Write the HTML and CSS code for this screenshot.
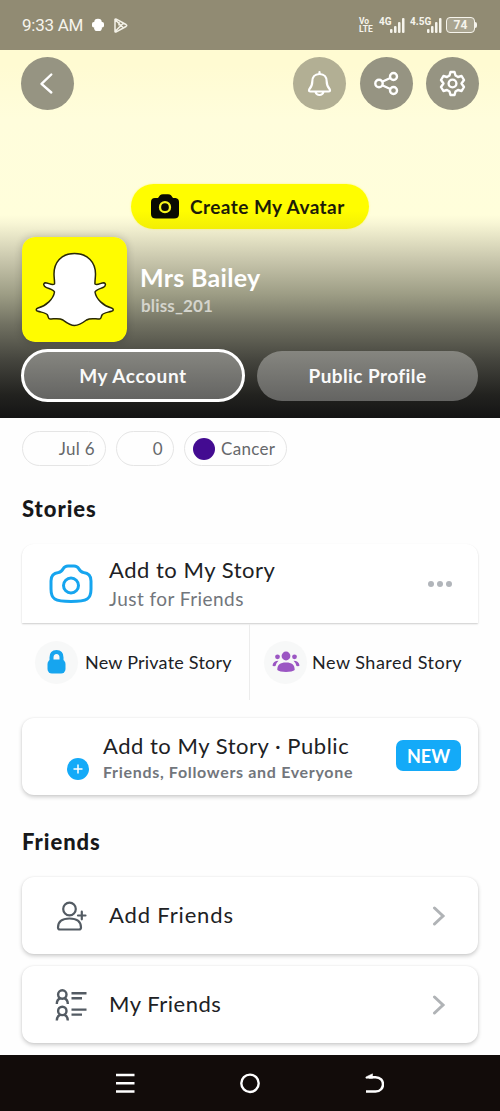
FILE: index.html
```html
<!DOCTYPE html>
<html lang="en">
<head>
<meta charset="utf-8">
<title>Profile</title>
<link rel="stylesheet" href="styles.css">
</head>
<body>
<div class="phone">
  <div class="status">
    <span class="time">9:33 AM</span>
    <svg class="droid" width="12" height="14" viewBox="0 0 12 14" fill="#fff"><path d="M2.200 4.200A3.800 3.400 0 0 1 9.800 4.200V11.200H2.200Z"/><rect x="0" y="4" width="12" height="5.500" rx="1.800"/><rect x="2.600" y="9" width="6.800" height="4" rx="1.400"/></svg>
    <svg class="play" width="14" height="15" viewBox="0 0 14 15" fill="none" stroke="#f4f2e8" stroke-width="1.500" stroke-linejoin="round"><path d="M1 1.300V13.700Q1.500 14.200 2.300 13.800L12 8.500Q13.500 7.500 12 6.500L2.300 1.200Q1.500 .8 1 1.300ZM1.500 2L9.500 10M1.500 13L9.500 5M5 2.800V7.500"/></svg>
    <span class="volte"><span>Vo</span><span>LTE</span></span>
    <span class="net net-a">4G</span>
    <svg class="bars" width="15" height="15" viewBox="0 0 15 15" fill="#f6f4ec"><rect x="0" y="11" width="2.500" height="4" rx="1"/><rect x="4" y="8" width="2.500" height="7" rx="1"/><rect x="8" y="4" width="2.500" height="11" rx="1"/><rect x="12" y="0" width="2.500" height="15" rx="1"/></svg>
    <span class="net net-b">4.5G</span>
    <svg class="bars tuck" width="15" height="15" viewBox="0 0 15 15" fill="#f6f4ec"><rect x="0" y="11" width="2.500" height="4" rx="1"/><rect x="4" y="8" width="2.500" height="7" rx="1"/><rect x="8" y="4" width="2.500" height="11" rx="1"/><rect x="12" y="0" width="2.500" height="15" rx="1"/></svg>
    <span class="battery">74</span><span class="battery-tip"></span>
  </div>

  <header class="hero">
    <div class="tools">
      <span class="round back"><svg width="53" height="53" viewBox="0 0 53 53" fill="none" stroke="#fff" stroke-width="2.400" stroke-linecap="round" stroke-linejoin="round"><path d="M30.300 17.500L20.500 26.800L30.300 35.500"/></svg></span>
      <span class="round bell"><svg width="53" height="53" viewBox="0 0 53 53" fill="none" stroke="#fff" stroke-width="2.200" stroke-linejoin="round" stroke-linecap="round"><path d="M26.500 15V17M26.500 17C21.500 17 19.300 20.500 19.300 24.500C19.300 28.500 18.500 29.800 16.300 32.300Q15.300 34.500 17.500 34.500H35.500Q37.700 34.500 36.700 32.300C34.500 29.800 33.700 28.500 33.700 24.500C33.700 20.500 31.500 17 26.500 17ZM22.500 35Q23.500 38 26.500 38T30.500 35"/></svg></span>
      <span class="round"><svg width="53" height="53" viewBox="0 0 53 53" fill="none" stroke="#fff" stroke-width="2.400"><path d="M22.700 24.500L30.300 21M22.700 28.500L30.300 32"/><circle cx="19" cy="26.500" r="3.700"/><circle cx="33.500" cy="19.500" r="3.500"/><circle cx="33.500" cy="33.500" r="3.500"/></svg></span>
      <span class="round"><svg width="53" height="53" viewBox="0 0 53 53" fill="none" stroke="#fff" stroke-width="2.400" stroke-linejoin="round"><path d="M24.500 15H28.500L29.500 18.500L32 20L35.600 19L38 23L35.500 26.500L38 30L35.600 34L32 33L29.500 34.500L28.500 38H24.500L23.500 34.500L21 33L17.400 34L15 30L17.500 26.500L15 23L17.400 19L21 20L23.500 18.500Z"/><circle cx="26.500" cy="26.500" r="3.900"/></svg></span>
    </div>
    <div class="create"><svg width="28" height="25" viewBox="0 0 28 25"><path d="M4 4H7L9 1.200Q10 .3 12 .3H17Q19 .3 20 1.200L22 4H24.500Q28 4.500 28 8V20Q28 24.500 23 24.500H5Q0 24.500 0 20V8Q0 4 4 4Z" fill="#090a02"/><circle cx="14" cy="13.200" r="5" fill="none" stroke="#f5f31d" stroke-width="2.300"/></svg><span class="create-label">Create My Avatar</span></div>
    <div class="person">
      <svg class="avatar" width="105" height="105" viewBox="0 0 105 105"><rect width="105" height="105" rx="13" fill="#fffc00"/><path d="M52.500 16.500C39 16.500 32 25.500 32 37C32 41 32.800 44.500 32.500 47C30 49 26 45.500 23 45.700C21 46.500 21.500 49 24 50.300C27 51.800 31.500 52.500 32.500 55C31.500 62 24 69 16 71C13.500 72 13.800 73.800 16 74.300C20 75.500 24 75.500 25.500 78C26.500 80 26 81.800 28 82C32 82 37 80.500 41 83C45 86 48 88.500 52.500 88.500C57 88.500 60.500 86 64.500 83C68.500 80.500 73 82 77.500 82C79.500 81.800 78.800 80 80 78C81.500 75.500 85.500 75.500 89.500 74.300C91.700 73.800 92 72 89.500 71C81.500 69 74 62 73 55C74 52.500 78 51.800 81.500 50.300C84 49 84 46.500 82 45.700C79 45.500 75.500 49 73 47C72.700 44.500 73.500 41 73.500 37C73.500 25.500 66 16.500 52.500 16.500Z" fill="#fff" stroke="#292807" stroke-width="1.500" stroke-linejoin="round"/></svg>
      <div class="names"><span class="name">Mrs Bailey</span><span class="user">bliss_201</span></div>
    </div>
    <div class="tabs">
      <span class="tab tab-on"><span class="t-acc">My Account</span></span>
      <span class="tab tab-off"><span class="t-pub">Public Profile</span></span>
    </div>
  </header>

  <main class="content">
    <div class="chips">
      <span class="chip chip-date">Jul 6</span>
      <span class="chip chip-score">0</span>
      <span class="chip chip-sign"><i class="sign"></i><span>Cancer</span></span>
    </div>

    <h2 class="title title-stories">Stories</h2>
    <div class="card story">
      <svg class="cam" width="44" height="40" viewBox="0 0 44 40" fill="none" stroke="#16a5ef" stroke-width="3"><path d="M9.500 8.500C12 8 13 7 14 5C15.200 3 16.500 2 19 2H25C27.500 2 28.800 3 30 5C31 7 32 8 34.500 8.500C39.500 9 42 12 42 17V25C42 35 38.500 37.500 22 37.500S2 35 2 25V17C2 12 4.500 9 9.500 8.500Z"/><circle cx="22" cy="21.500" r="7.500"/></svg>
      <div class="lines"><span class="big b-story">Add to My Story</span><span class="sub s-friends">Just for Friends</span></div>
      <span class="dots"><i></i><i></i><i></i></span>
    </div>
    <div class="pair">
      <div class="half half-a"><span class="disc"><svg width="19" height="24" viewBox="0 0 19 24"><path d="M4.500 11V7.500Q4.500 2 9.500 2T14.500 7.500V11" fill="none" stroke="#16a5ef" stroke-width="4"/><rect x=".5" y="9.500" width="18" height="14" rx="4.500" fill="#16a5ef"/></svg></span><span class="new n-private">New Private Story</span></div>
      <div class="half half-b"><span class="disc"><svg width="28" height="22" viewBox="0 0 28 22" fill="#9b56c3"><circle cx="14" cy="5" r="4.400"/><circle cx="5.500" cy="5.800" r="2.400"/><circle cx="22.500" cy="5.800" r="2.400"/><path d="M5.300 19C5.300 13.500 8 11.500 14 11.500S22.700 13.500 22.700 19C20.500 21.500 7.500 21.500 5.300 19ZM.5 14.500Q1 10 6.500 9.800Q4 12 3.500 15Q1 15.500.5 14.500ZM27.500 14.500Q27 10 21.500 9.800Q24 12 24.500 15Q27 15.500 27.500 14.500Z"/></svg></span><span class="new n-shared">New Shared Story</span></div>
    </div>
    <div class="card public">
      <svg class="plus" width="22" height="22" viewBox="0 0 22 22"><circle cx="11" cy="11" r="11" fill="#14aaf8"/><path d="M6.500 11H15.500M11 6.500V15.500" stroke="#fff" stroke-width="1.500"/></svg>
      <div class="lines"><span class="big b-public">Add to My Story · Public</span><span class="sub s-every">Friends, Followers and Everyone</span></div>
      <span class="badge">NEW</span>
    </div>

    <h2 class="title title-friends">Friends</h2>
    <div class="card row">
      <svg class="row-icon" width="32" height="32" viewBox="0 0 32 32" fill="none" stroke="#535b63" stroke-width="2.200" stroke-linecap="round" stroke-linejoin="round"><circle cx="14.500" cy="9" r="6.300"/><path d="M3 27.500C3 21.500 7.500 18.500 14.500 18.500S26 21.500 26 27.500Q26 29.500 24 29.500H5Q3 29.500 3 27.500ZM23 15.500H30.500M26.800 11.700V19.300"/></svg>
      <span class="big b-add">Add Friends</span>
      <svg class="chev" width="14" height="20" viewBox="0 0 14 20" fill="none" stroke="#b0b3b6" stroke-width="3" stroke-linecap="round"><path d="M2.500 2L11 10L2.500 18"/></svg>
    </div>
    <div class="card row row-last">
      <svg class="row-icon" width="32" height="32" viewBox="0 0 32 32" fill="none" stroke="#535b63" stroke-width="2.400"><g id="p"><circle cx="7.300" cy="5.500" r="4.200"/><path d="M1.800 15C1.800 11.500 3.500 10 5.500 9.200M12.800 15C12.800 11.500 11.100 10 9.100 9.200"/><path d="M16.500 4.200H31.500M16.500 9.200H27"/></g><use href="#p" y="16.400"/></svg>
      <span class="big b-my">My Friends</span>
      <svg class="chev" width="14" height="20" viewBox="0 0 14 20" fill="none" stroke="#b0b3b6" stroke-width="3" stroke-linecap="round"><path d="M2.500 2L11 10L2.500 18"/></svg>
    </div>
  </main>

  <nav class="nav">
    <svg width="19" height="21" viewBox="0 0 19 21" stroke="#fff" stroke-width="2.400"><path d="M0 2H18.500M0 10.200H18.500M0 18.500H18.500"/></svg>
    <svg width="21" height="21" viewBox="0 0 21 21" fill="none" stroke="#fff" stroke-width="2.400"><circle cx="10" cy="10.300" r="8.700"/></svg>
    <svg width="19" height="21" viewBox="0 0 19 21" fill="none" stroke="#fff" stroke-width="2.500"><path d="M1 18.500H10.500C20.500 18.500 20.500 4.200 10.500 4.200H4"/><path d="M.8 4L7.500.8V5.300H1Z" fill="#fff" stroke-width=".5"/></svg>
  </nav>
</div>
</body>
</html>
```
FILE: styles.css
```css
* { box-sizing: border-box; }
body { margin: 0; background: #fefefe; font-family: Lato, sans-serif; color: #202124; }
svg { display: block; flex: none; }
.phone { width: 500px; height: 1111px; display: flex; flex-direction: column; overflow: hidden; }

.status { height: 50px; flex: none; background: #918b73; color: #f6f4ec; display: flex; align-items: center; padding: 0 22px; font-family: Roboto, sans-serif; }
.time { font-size: 17px; width: 61px; white-space: nowrap; letter-spacing: -.25px; }
.droid { margin-left: 9px; }
.play { margin-left: 10px; }
.volte { margin-left: auto; display: flex; flex-direction: column; font-size: 8.500px; line-height: 8px; font-weight: 700; width: 16px; }
.net { font-size: 10px; font-weight: 700; line-height: 10px; margin-bottom: 7px; white-space: nowrap; }
.net-a { margin-left: 4px; width: 11px; }
.net-b { margin-left: 5px; width: 21px; }
.bars { margin-bottom: -1px; }
.tuck { margin-left: -4px; }
.battery { margin-left: 4px; width: 29px; height: 16px; border: 1.500px solid #f6f4ec; border-radius: 4px; background: #aaa591; font-size: 12px; font-weight: 700; line-height: 14px; text-align: center; }
.battery-tip { width: 2px; height: 6px; background: #f6f4ec; border-radius: 0 2px 2px 0; margin-right: 1px; }

.hero { height: 368px; flex: none; padding: 7px 21px 0; background: linear-gradient(#fffbd2 0, #fffbd2 15px, #fffddc 70px, #fffedb 165px, #f8f6d5 173px, #c8c6ac 210px, #9c9c84 245px, #707061 275px, #45453e 310px, #22221f 345px, #141414 368px); }
.tools { display: flex; gap: 13.500px; }
.round { width: 53px; height: 53px; border-radius: 50%; background: #969482; }
.back { margin-right: auto; }
.bell { background: #b2af94; }
.create { width: 238px; height: 45px; margin: 74px auto 0; border-radius: 23px; background: linear-gradient(#fffd00 60%, #f2ee05); display: flex; align-items: center; padding-left: 20px; box-shadow: 0 0 2px #fff80080; }
.create-label { margin-left: 11px; font-size: 19px; font-weight: 700; color: #1c1b08; white-space: nowrap; letter-spacing: .45px; }
.person { display: flex; margin: 8px 0 0 1px; }
.avatar { border-radius: 13px; box-shadow: 0 0 8px #0003; }
.names { margin: 24px 0 0 13px; display: flex; flex-direction: column; color: #fff; }
.name { font-size: 25px; line-height: 32px; font-weight: 700; letter-spacing: .3px; }
.user { margin: 1px 0 0 1px; font-size: 17px; line-height: 24px; font-weight: 700; color: #d4d4cc; letter-spacing: .15px; }
.tabs { display: flex; align-items: center; gap: 12px; margin-top: 7px; }
.tab { height: 50px; border-radius: 27px; display: flex; align-items: center; justify-content: center; background: linear-gradient(#868680, #646462); color: #fafafa; font-size: 19px; font-weight: 700; }
.tab-on { width: 224px; height: 53px; border: 3px solid #fff; letter-spacing: .6px; }
.tab-off { width: 221px; letter-spacing: .42px; }

.content { flex: 1; padding: 0 22px; }
.chips { display: flex; gap: 10px; margin-top: 13px; }
.chip { height: 35px; border: 1.500px solid #e5e5e5; border-radius: 18px; display: flex; align-items: center; font-size: 17px; color: #66686b; white-space: nowrap; letter-spacing: .3px; }
.chip-date { width: 84px; justify-content: flex-end; padding-right: 10px; }
.chip-score { width: 58px; justify-content: flex-end; padding-right: 10px; }
.chip-sign { width: 103px; padding-left: 8px; gap: 6px; }
.sign { width: 22px; height: 22px; border-radius: 50%; background: #430b91; }
.title { margin: 0; font-size: 22px; line-height: 30px; font-weight: 900; color: #17181a; letter-spacing: .95px; }
.title-stories { margin-top: 28px; }
.title-friends { margin-top: 32px; }
.card { display: flex; background: #fff; border-radius: 12px; box-shadow: 0 2px 4px #0003, 0 0 2px #0001; }
.story { height: 79px; margin-top: 20px; border-radius: 12px 12px 0 0; box-shadow: 0 1px 2px #0003; padding-left: 27px; }
.cam { margin-top: 20px; }
.lines { display: flex; flex-direction: column; white-space: nowrap; }
.story .lines { margin: 11px 0 0 16px; }
.big { font-size: 22px; line-height: 30px; white-space: nowrap; letter-spacing: .52px; }
.sub { color: #72767c; }
.s-friends { font-size: 19px; line-height: 27px; letter-spacing: .45px; }
.dots { margin: 37px 26px 0 auto; display: flex; gap: 3px; }
.dots i { width: 6px; height: 6px; border-radius: 50%; background: #b1b5ba; }
.pair { display: flex; height: 76px; margin-top: 1px; }
.half { display: flex; align-items: center; }
.half-a { width: 228px; border-right: 1px solid #ececec; padding-left: 13px; }
.half-b { padding-left: 14px; }
.disc { width: 43px; height: 43px; border-radius: 50%; background: #f7f8f8; display: flex; align-items: center; justify-content: center; }
.new { margin-left: 7px; font-size: 18px; white-space: nowrap; letter-spacing: .22px; }
.half-b .new { margin-left: 5px; letter-spacing: .5px; }
.public { height: 77px; margin-top: 18px; padding-left: 45px; }
.plus { margin-top: 40px; }
.public .lines { margin: 13px 0 0 14px; }
.s-every { font-size: 16px; line-height: 22px; font-weight: 700; letter-spacing: .68px; }
.badge { margin: 22px 17px 0 auto; width: 65px; height: 31px; border-radius: 7px; background: #14aaf8; color: #fff; font-size: 18px; line-height: 32px; font-weight: 700; text-align: center; }
.row { height: 77px; margin-top: 20px; align-items: center; padding-left: 33px; }
.row-icon { margin-right: 22px; }
.row .big { margin-top: -2px; }
.b-add { letter-spacing: .85px; }
.row-last { margin-top: 12px; }
.chev { margin: 0 32px 0 auto; }

.nav { height: 56px; flex: none; background: #120c0a; display: flex; align-items: center; justify-content: space-between; padding: 0 116px; }
```
